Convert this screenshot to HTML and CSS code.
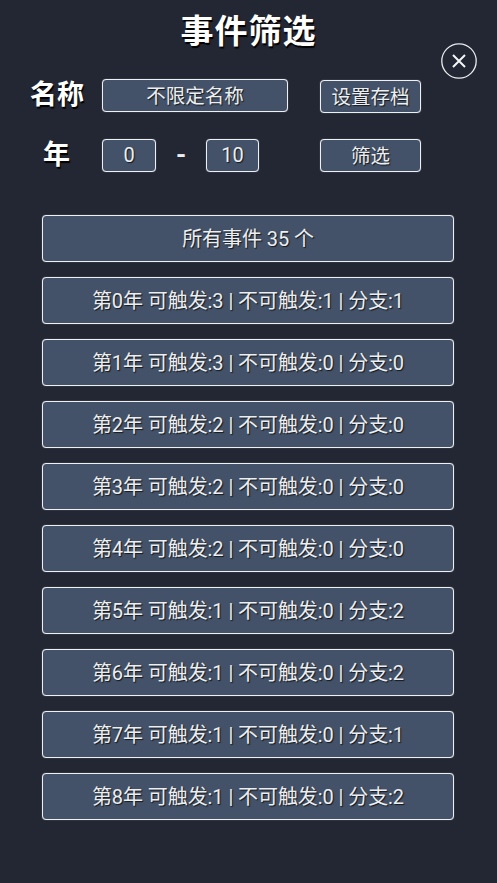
FILE: index.html
```html
<!DOCTYPE html>
<html>
<head>
<meta charset="utf-8">
<title>事件筛选</title>
<link rel="stylesheet" href="styles.css">
</head>
<body>
	<div id="panel">
		<h1 class="title">事件筛选</h1>
		<div class="close">
			<svg width="36" height="36" viewBox="0 0 36 36">
				<circle cx="18" cy="18" r="17.2" fill="none" stroke="#e8eaec" stroke-width="1.3"/>
				<path d="M12 12 L24 24 M24 12 L12 24" fill="none" stroke="#f4f5f6" stroke-width="2"/>
			</svg>
		</div>

		<div class="filter">
			<div class="row row-name">
				<div class="label label-name">名称</div>
				<div class="box box-name">不限定名称</div>
				<div class="box box-action box-save">设置存档</div>
			</div>
			<div class="row row-year">
				<div class="label label-year">年</div>
				<div class="box box-num box-from">0</div>
				<div class="dash">-</div>
				<div class="box box-num">10</div>
				<div class="box box-action box-go">筛选</div>
			</div>
		</div>

		<div id="events">
			<div class="box event">所有事件 35 个</div>
			<div class="box event">第0年 可触发:3 | 不可触发:1 | 分支:1</div>
			<div class="box event">第1年 可触发:3 | 不可触发:0 | 分支:0</div>
			<div class="box event">第2年 可触发:2 | 不可触发:0 | 分支:0</div>
			<div class="box event">第3年 可触发:2 | 不可触发:0 | 分支:0</div>
			<div class="box event">第4年 可触发:2 | 不可触发:0 | 分支:0</div>
			<div class="box event">第5年 可触发:1 | 不可触发:0 | 分支:2</div>
			<div class="box event">第6年 可触发:1 | 不可触发:0 | 分支:2</div>
			<div class="box event">第7年 可触发:1 | 不可触发:0 | 分支:1</div>
			<div class="box event">第8年 可触发:1 | 不可触发:0 | 分支:2</div>
		</div>
	</div>
</body>
</html>
```

FILE: styles.css
```css
html, body {
	margin: 0;
	padding: 0;
}
body {
	background-color: #232733;
	color: #eceef0;
	font-family: Roboto, "Noto Sans CJK SC", sans-serif;
	height: 883px;
	overflow: hidden;
}
#panel {
	height: 883px;
	position: relative;
	width: 497px;
}
.title {
	color: #fff;
	font-size: 33px;
	font-weight: bold;
	height: 48px;
	letter-spacing: 1px;
	line-height: 48px;
	margin: 0;
	padding-top: 8px;
	text-align: center;
	text-shadow: 1px 2px 1px #000;
}
.close {
	height: 36px;
	left: 441px;
	position: absolute;
	top: 43px;
	width: 36px;
}
.close svg {
	display: block;
}
.filter {
	padding-top: 23px;
}
.row {
	align-items: flex-start;
	display: flex;
}
.row-name {
	height: 60px;
}
.row-year {
	height: 76px;
}
.label {
	box-sizing: border-box;
	color: #fff;
	font-size: 27px;
	font-weight: bold;
	line-height: 33px;
	padding-left: 12px;
	text-align: center;
	text-shadow: 1px 2px 1px #000;
	width: 102px;
}
.label-year {
	padding-left: 11px;
}
.box {
	align-items: center;
	background-color: #435268;
	border: 1px solid #eef0f2;
	border-radius: 4px;
	box-shadow: 0 0 1px rgba(255, 255, 255, 0.6);
	box-sizing: border-box;
	display: flex;
	justify-content: center;
	padding-bottom: 2px;
	text-shadow: 1px 1px 1px #14181f;
}
.box-name {
	font-size: 19.5px;
	height: 33px;
	padding-bottom: 3px;
	width: 186px;
}
.box-action {
	font-size: 19.5px;
	height: 33px;
	width: 101px;
}
.box-save {
	margin-left: 32px;
	margin-top: 1px;
}
.box-go {
	margin-left: 61px;
}
.box-num {
	font-size: 20px;
	height: 33px;
	width: 53px;
}
.box-from {
	width: 54px;
}
.dash {
	font-size: 26px;
	font-weight: bold;
	line-height: 33px;
	text-align: center;
	width: 50px;
}
#events {
	display: flex;
	flex-direction: column;
	gap: 15px;
	padding: 0 42px;
}
.event {
	font-size: 20px;
	height: 47px;
	letter-spacing: -0.08px;
	width: 412px;
}
```
